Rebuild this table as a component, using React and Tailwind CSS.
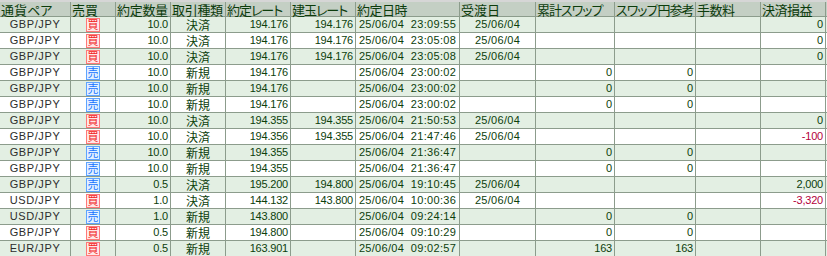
import React from "react";

const GRID =
  "grid grid-cols-[71px_45px_55px_55px_65px_65px_104px_76px_79px_81px_65px_65px]";

const headers = [
  ["通貨ペア", ""],
  ["売買", ""],
  ["約定数量", "tracking-[-0.3px]"],
  ["取引種類", "tracking-[-0.3px]"],
  ["約定レート", "tracking-[-1px]"],
  ["建玉レート", "tracking-[-1px]"],
  ["約定日時", "tracking-[-0.5px]"],
  ["受渡日", ""],
  ["累計スワップ", "tracking-[-1px]"],
  ["スワップ円参考", "tracking-[-1px]"],
  ["手数料", "tracking-[-0.5px]"],
  ["決済損益", "tracking-[-0.5px]"],
];

const rows = [
  ["GBP/JPY", "買", "10.0", "決済", "194.176", "194.176", "25/06/04  23:09:55", "25/06/04", "", "", "", "0"],
  ["GBP/JPY", "買", "10.0", "決済", "194.176", "194.176", "25/06/04  23:05:08", "25/06/04", "", "", "", "0"],
  ["GBP/JPY", "買", "10.0", "決済", "194.176", "194.176", "25/06/04  23:05:08", "25/06/04", "", "", "", "0"],
  ["GBP/JPY", "売", "10.0", "新規", "194.176", "", "25/06/04  23:00:02", "", "0", "0", "", ""],
  ["GBP/JPY", "売", "10.0", "新規", "194.176", "", "25/06/04  23:00:02", "", "0", "0", "", ""],
  ["GBP/JPY", "売", "10.0", "新規", "194.176", "", "25/06/04  23:00:02", "", "0", "0", "", ""],
  ["GBP/JPY", "買", "10.0", "決済", "194.355", "194.355", "25/06/04  21:50:53", "25/06/04", "", "", "", "0"],
  ["GBP/JPY", "買", "10.0", "決済", "194.356", "194.355", "25/06/04  21:47:46", "25/06/04", "", "", "", "-100"],
  ["GBP/JPY", "売", "10.0", "新規", "194.355", "", "25/06/04  21:36:47", "", "0", "0", "", ""],
  ["GBP/JPY", "売", "10.0", "新規", "194.355", "", "25/06/04  21:36:47", "", "0", "0", "", ""],
  ["GBP/JPY", "売", "0.5", "決済", "195.200", "194.800", "25/06/04  19:10:45", "25/06/04", "", "", "", "2,000"],
  ["USD/JPY", "買", "1.0", "決済", "144.132", "143.800", "25/06/04  10:00:36", "25/06/04", "", "", "", "-3,320"],
  ["USD/JPY", "売", "1.0", "新規", "143.800", "", "25/06/04  09:24:14", "", "0", "0", "", ""],
  ["GBP/JPY", "買", "0.5", "新規", "194.800", "", "25/06/04  09:10:29", "", "0", "0", "", ""],
  ["EUR/JPY", "買", "0.5", "新規", "163.901", "", "25/06/04  09:02:57", "", "163", "163", "", ""],
];

function Badge({ side }) {
  if (side === "買") {
    return (
      <span className="flex h-[14px] w-[14px] items-center justify-center border border-[#ff7878] bg-[#ffe6e6] font-['Noto_Sans_CJK_JP',sans-serif] text-[11px] leading-none text-[#f02020]">
        買
      </span>
    );
  }
  return (
    <span className="flex h-[14px] w-[14px] items-center justify-center border border-[#5ea4ff] bg-[#e2f0ff] font-['Noto_Sans_CJK_JP',sans-serif] text-[11px] leading-none text-[#1874ff]">
      売
    </span>
  );
}

const cell = "flex items-center border-r border-[#8c9c8c] whitespace-pre";

function Row({ r, i }) {
  const bg = i % 2 === 0 ? "bg-[#e3efe3]" : "bg-white";
  const num = "justify-end pr-[2px] tracking-[-0.2px]";
  const neg = (v) => (v.startsWith("-") ? "text-[#b4003c]" : "text-[#0c400c]");
  return (
    <div className={`${GRID} h-[16px] border-t border-[#8c9c8c] ${bg} text-[11px] leading-none text-[#0c400c]`}>
      <div className={`${cell} justify-center text-[#2c2c2c] tracking-[0.6px]`}>{r[0]}</div>
      <div className={`${cell} justify-center`}>
        <Badge side={r[1]} />
      </div>
      <div className={`${cell} ${num}`}>{r[2]}</div>
      <div className={`${cell} justify-center font-['Noto_Sans_CJK_JP',sans-serif] text-[12px]`}>{r[3]}</div>
      <div className={`${cell} ${num}`}>{r[4]}</div>
      <div className={`${cell} ${num}`}>{r[5]}</div>
      <div className={`${cell} justify-center tracking-[0.3px]`}>{r[6]}</div>
      <div className={`${cell} justify-center tracking-[0.3px]`}>{r[7]}</div>
      <div className={`${cell} ${num}`}>{r[8]}</div>
      <div className={`${cell} ${num}`}>{r[9]}</div>
      <div className={`${cell} ${num}`}>{r[10]}</div>
      <div className={`${cell} ${num} ${neg(r[11])}`}>{r[11]}</div>
    </div>
  );
}

export default function App() {
  return (
    <div className="h-[256px] w-[827px] overflow-hidden bg-white font-['Liberation_Sans','Noto_Sans_CJK_JP',sans-serif]">
      <div className="h-[2px] bg-[#d6d6d6]" />
      <div className={`${GRID} h-[14px] bg-[#c4cfc4] font-['Noto_Sans_CJK_JP',sans-serif] text-[13px] text-[#0c3c0c] [font-feature-settings:'palt']`}>
        {headers.map(([h, t]) => (
          <div key={h} className="flex items-center border-r border-[#8c9c8c] pl-[1px]">
            <span className={`whitespace-nowrap leading-none ${t}`}>{h}</span>
          </div>
        ))}
      </div>
      {rows.map((r, i) => (
        <Row key={i} r={r} i={i} />
      ))}
    </div>
  );
}
